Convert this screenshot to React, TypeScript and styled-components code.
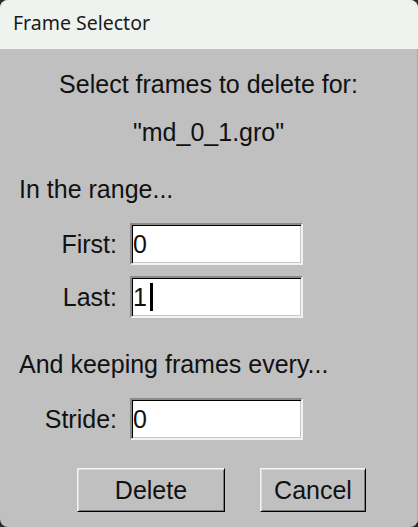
import React from "react";
import styled, { createGlobalStyle } from "styled-components";

const GlobalStyle = createGlobalStyle`
  html, body {
    margin: 0;
    padding: 0;
    background: #2b2b2b;
  }
  #root {
    width: 418px;
    height: 527px;
  }
`;

type EntryProps = {
  label: string;
  value: string;
  focused?: boolean;
};

const Entry = ({ label, value, focused }: EntryProps) => (
  <>
    <FieldLabel>{label}</FieldLabel>
    <Field>
      {value}
      {focused && <Caret />}
    </Field>
  </>
);

export default function App() {
  return (
    <>
      <GlobalStyle />
      <Window>
        <TitleBar>
          <Title>Frame Selector</Title>
        </TitleBar>
        <Body>
          <Heading>Select frames to delete for:</Heading>
          <FileName>"md_0_1.gro"</FileName>

          <Section>In the range...</Section>
          <FieldGrid>
            <Entry label="First:" value="0" />
            <Entry label="Last:" value="1" focused />
          </FieldGrid>

          <Section $gap={32}>And keeping frames every...</Section>
          <FieldGrid>
            <Entry label="Stride:" value="0" />
          </FieldGrid>

          <ButtonRow>
            <Button $width={148}>Delete</Button>
            <Button $width={106}>Cancel</Button>
          </ButtonRow>
        </Body>
      </Window>
    </>
  );
}

const Window = styled.div`
  display: flex;
  flex-direction: column;
  width: 418px;
  height: 527px;
  border-radius: 8px;
  overflow: hidden;
  background: #c0c0c0;
`;

const TitleBar = styled.div`
  display: flex;
  align-items: center;
  height: 49px;
  padding: 0 13px 4px;
  box-sizing: border-box;
  background: #eef3ef;
`;

const Title = styled.span`
  font-family: "Noto Sans", "Open Sans", sans-serif;
  font-size: 19.5px;
  color: #1a1a1a;
`;

const Body = styled.div`
  flex: 1;
  display: flex;
  flex-direction: column;
  padding: 21px 0 0 19px;
  border-right: 1px solid #a9a9a9;
  font-family: "Liberation Sans", Arial, sans-serif;
  font-size: 25px;
  line-height: 28px;
  color: #111;
`;

const Heading = styled.div`
  text-align: center;
  padding-right: 19px;
`;

const FileName = styled(Heading)`
  margin-top: 20px;
`;

const Section = styled.div<{ $gap?: number }>`
  margin-top: ${(p) => p.$gap ?? 29}px;
`;

const FieldGrid = styled.div`
  display: grid;
  grid-template-columns: 98px 173px;
  column-gap: 13px;
  row-gap: 11px;
  align-items: center;
  margin-top: 20px;
`;

const FieldLabel = styled.div`
  text-align: right;
`;

const Field = styled.div`
  display: flex;
  align-items: center;
  box-sizing: border-box;
  height: 42px;
  padding-left: 1px;
  background: #ffffff;
  border: 2px solid;
  border-color: #8a8a8a #f2f2f2 #f2f2f2 #8a8a8a;
  box-shadow: inset 1px 1px 0 #000, inset -1px -1px 0 #c8c8c8;
`;

const Caret = styled.span`
  display: inline-block;
  width: 3px;
  height: 28px;
  margin-left: 3px;
  background: #000;
`;

const ButtonRow = styled.div`
  display: flex;
  gap: 35px;
  margin-top: 28px;
  padding-left: 58px;
`;

const Button = styled.div<{ $width: number }>`
  display: flex;
  align-items: center;
  justify-content: center;
  box-sizing: border-box;
  width: ${(p) => p.$width}px;
  height: 44px;
  background: #c0c0c0;
  border: 1px solid;
  border-color: #f4f4f4 #000 #000 #f4f4f4;
  box-shadow: inset 1px 1px 0 #dcdcdc, inset -1px -1px 0 #7a7a7a;
  font-size: 25px;
  color: #111;
`;
